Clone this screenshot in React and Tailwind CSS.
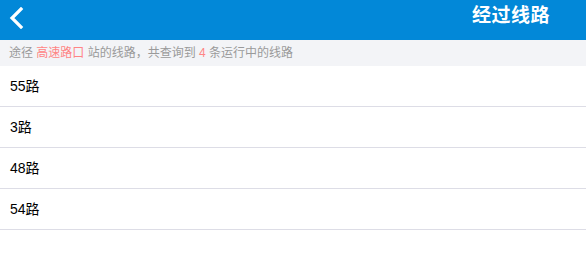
export default function App() {
  const routes = ["55路", "3路", "48路", "54路"];
  return (
    <div className="w-[586px] h-[254px] bg-white" style={{ fontFamily: '"Liberation Sans", "Noto Sans CJK SC", sans-serif' }}>
      <div className="h-[40px] bg-[#0288d8] flex items-center justify-between pl-[8px] pr-[36px]">
        <svg width="16" height="22" viewBox="0 0 16 22" className="mt-[-4px]">
          <path d="M13 2 L4 11 L13 20" fill="none" stroke="white" strokeWidth="3.2" strokeLinecap="square" />
        </svg>
        <div className="text-white text-[19px] font-bold leading-none mt-[-9px] tracking-[0.5px]">经过线路</div>
      </div>
      <div className="h-[26px] bg-[#f3f4f7] flex items-center pl-[9px] text-[12px] text-[#9a9a9a] whitespace-pre">
        途径 <span className="text-[#ff8585]">高速路口</span> 站的线路，共查询到 <span className="text-[#ff8585]">4</span> 条运行中的线路
      </div>
      {routes.map((r) => (
        <div key={r} className="h-[41px] border-b border-[#dddde6] flex items-center pl-[10px] text-[14px] text-black">
          {r}
        </div>
      ))}
    </div>
  );
}
